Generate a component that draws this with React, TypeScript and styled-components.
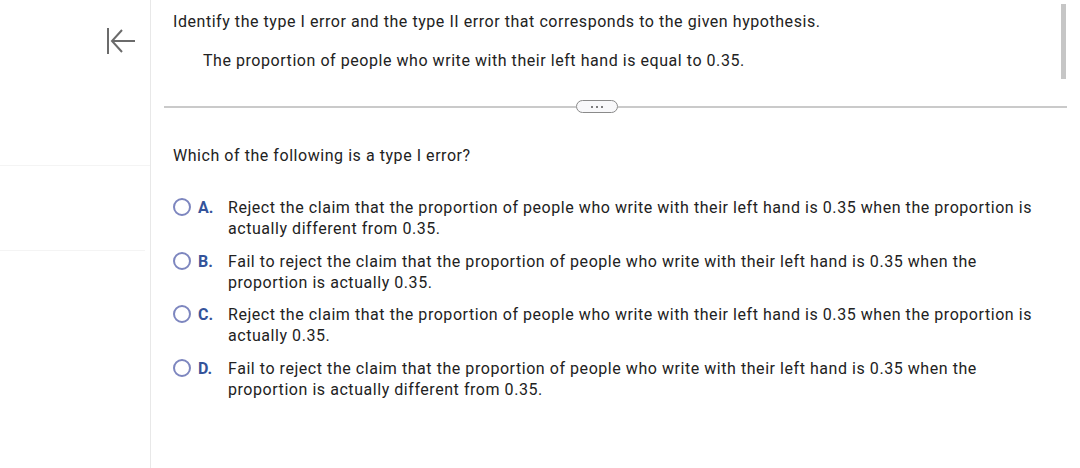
import styled, { createGlobalStyle } from "styled-components";

const GlobalStyle = createGlobalStyle`
  html, body {
    margin: 0;
    padding: 0;
    background: #ffffff;
  }
  body {
    font-family: Roboto, "Liberation Sans", sans-serif;
    color: #222222;
  }
`;

const Page = styled.div`
  display: flex;
  width: 1080px;
  height: 468px;
  overflow: hidden;
  position: relative;
`;

const Sidebar = styled.aside`
  width: 150px;
  flex-shrink: 0;
  border-right: 1px solid #e8e8e8;
  display: flex;
  flex-direction: column;
`;

const CollapseRow = styled.div`
  height: 166px;
  border-bottom: 1px solid #f4f4f4;
  display: flex;
  justify-content: flex-end;
  padding: 27px 14px 0 0;
  box-sizing: border-box;
`;

const SideBlock = styled.div`
  height: 84px;
  border-bottom: 1px solid #f4f4f4;
  margin-right: 5px;
`;

const Main = styled.main`
  flex: 1;
  padding: 11px 0 0 22px;
  position: relative;
`;

const Prompt = styled.p`
  margin: 0;
  font-size: 16px;
  line-height: 21px;
  letter-spacing: 0.55px;
`;

const Hypothesis = styled(Prompt)`
  margin: 18px 0 0 30px;
`;

const DividerRow = styled.div`
  display: flex;
  align-items: center;
  margin: 29px 0 0 -9px;
  width: 903px;
`;

const Line = styled.div<{ $width?: number }>`
  flex: ${(p) => (p.$width ? `0 0 ${p.$width}px` : "1")};
  height: 2px;
  background: #cacaca;
`;

const MoreButton = styled.div`
  width: 40px;
  height: 11px;
  border: 1px solid #8a8a8a;
  border-radius: 7px;
  background: #f8f8fa;
  display: flex;
  align-items: center;
  justify-content: center;
  gap: 3px;
`;

const Dot = styled.span`
  width: 2px;
  height: 2px;
  border-radius: 50%;
  background: #555;
`;

const Question = styled(Prompt)`
  margin-top: 32px;
`;

const Options = styled.div`
  margin-top: 31px;
  display: flex;
  flex-direction: column;
  gap: 11.5px;
`;

const Option = styled.label`
  display: flex;
  align-items: flex-start;
  font-size: 16px;
  line-height: 21px;
`;

const Radio = styled.span`
  width: 14px;
  height: 14px;
  border: 2px solid #7d86bf;
  border-radius: 50%;
  flex-shrink: 0;
  margin-top: 1px;
  background: #fff;
`;

const Letter = styled.span`
  width: 30px;
  margin-left: 7px;
  color: #34539a;
  font-weight: 700;
  flex-shrink: 0;
`;

const OptionText = styled.span`
  max-width: 815px;
  letter-spacing: 0.55px;
`;

const Scrollbar = styled.div`
  position: absolute;
  top: 4px;
  right: 14px;
  width: 5px;
  height: 75px;
  background: #c6c6c6;
`;

const options = [
  {
    letter: "A.",
    text: "Reject the claim that the proportion of people who write with their left hand is 0.35 when the proportion is actually different from 0.35.",
  },
  {
    letter: "B.",
    text: "Fail to reject the claim that the proportion of people who write with their left hand is 0.35 when the proportion is actually 0.35.",
  },
  {
    letter: "C.",
    text: "Reject the claim that the proportion of people who write with their left hand is 0.35 when the proportion is actually 0.35.",
  },
  {
    letter: "D.",
    text: "Fail to reject the claim that the proportion of people who write with their left hand is 0.35 when the proportion is actually different from 0.35.",
  },
];

const CollapseIcon = () => (
  <svg width="30" height="28" viewBox="0 0 30 28" fill="none" stroke="#6b6b6b" strokeWidth="2">
    <line x1="2" y1="1" x2="2" y2="27" />
    <line x1="6" y1="14" x2="29" y2="14" />
    <polyline points="16,3 6,14 16,25" />
  </svg>
);

export default function App() {
  return (
    <>
      <GlobalStyle />
      <Page>
        <Sidebar>
          <CollapseRow>
            <CollapseIcon />
          </CollapseRow>
          <SideBlock />
        </Sidebar>
        <Main>
          <Prompt>
            Identify the type I error and the type II error that corresponds to the given hypothesis.
          </Prompt>
          <Hypothesis>
            The proportion of people who write with their left hand is equal to 0.35.
          </Hypothesis>
          <DividerRow>
            <Line $width={412} />
            <MoreButton>
              <Dot />
              <Dot />
              <Dot />
            </MoreButton>
            <Line />
          </DividerRow>
          <Question>Which of the following is a type I error?</Question>
          <Options>
            {options.map((o) => (
              <Option key={o.letter}>
                <Radio />
                <Letter>{o.letter}</Letter>
                <OptionText>{o.text}</OptionText>
              </Option>
            ))}
          </Options>
          <Scrollbar />
        </Main>
      </Page>
    </>
  );
}
